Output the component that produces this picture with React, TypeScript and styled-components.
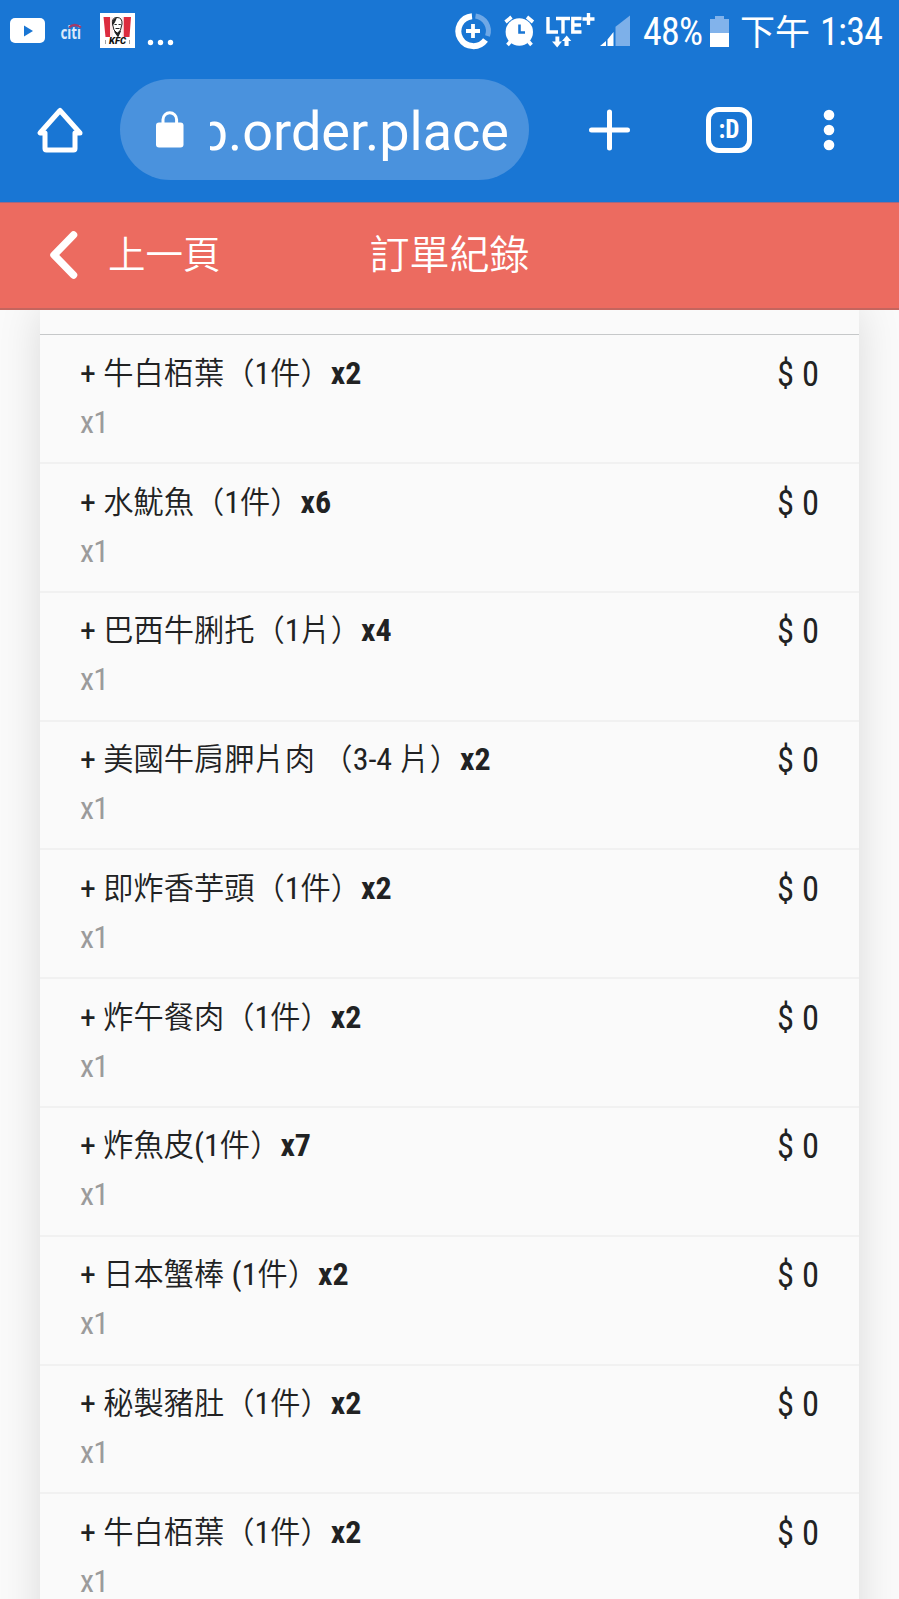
import React from 'react';
import styled, { createGlobalStyle } from 'styled-components';

const GlobalStyle = createGlobalStyle`
  * { box-sizing: border-box; }
  html, body { margin: 0; padding: 0; background: #fafafa; }
  body {
    height: 1599px;
    overflow: hidden;
    font-family: Roboto, 'Noto Sans CJK TC', sans-serif;
    color: #212223;
  }
`;

const Page = styled.div`
  width: 899px;
  height: 1599px;
  display: flex;
  flex-direction: column;
  overflow: hidden;
`;

const StatusBar = styled.div`
  flex: none;
  height: 66px;
  padding: 0 16px 4px 10px;
  display: flex;
  align-items: center;
  justify-content: space-between;
  background: #1976d4;
  color: #fff;
`;

const StatusGroup = styled.div`
  display: flex;
  align-items: center;
`;

const StatusText = styled.span<{ $left: number; $width: number }>`
  margin-left: ${(p) => p.$left}px;
  width: ${(p) => p.$width}px;
  padding-top: 2px;
  white-space: nowrap;
  font-size: 38px;
  line-height: 44px;
  letter-spacing: -0.7px;
  font-stretch: 75%;
`;

const MeridiemText = styled(StatusText)`
  font-family: 'Noto Sans CJK TC', sans-serif;
  font-size: 35px;
  font-weight: 400;
  letter-spacing: 0;
  padding: 0 0 2px;
`;

const BrowserBar = styled.div`
  flex: none;
  height: 136px;
  padding: 13px 57px 22px 36px;
  display: flex;
  align-items: center;
  background: #1976d4;
  color: #fff;
`;

const UrlPill = styled.div`
  width: 409px;
  height: 101px;
  margin: 0 60px 0 36px;
  padding: 0 20px 0 36px;
  border-radius: 51px;
  background: #4a92dd;
  display: flex;
  align-items: center;
`;

const UrlWindow = styled.div`
  flex: 1;
  margin-left: 26px;
  overflow: hidden;
  display: flex;
  justify-content: flex-end;
  font-size: 54px;
  line-height: 68px;
  padding-top: 4px;
`;

const ToolGap = styled.div<{ $w: number }>`
  width: ${(p) => p.$w}px;
`;

const TabCount = styled.div`
  width: 46px;
  height: 46px;
  border: 5px solid #fff;
  border-radius: 13px;
  display: flex;
  align-items: center;
  justify-content: center;
  font-size: 25px;
  font-weight: 700;
  font-stretch: 75%;
  line-height: 30px;
`;

const Header = styled.header`
  flex: none;
  height: 108px;
  padding-bottom: 1px;
  display: grid;
  grid-template-columns: 1fr auto 1fr;
  align-items: center;
  background: #ec6b60;
  border-top: 1px solid #a4677f;
  border-bottom: 2px solid #c4655e;
  color: #fff;
  font-family: 'Noto Sans CJK TC', sans-serif;
  font-weight: 350;
`;

const BackButton = styled.div`
  display: flex;
  align-items: center;
  gap: 30px;
  padding-left: 49px;
  font-size: 37.5px;
`;

const BackLabel = styled.span`
  line-height: 50px;
  padding-bottom: 7px;
`;

const Title = styled.div`
  font-size: 40px;
  line-height: 50px;
  padding-bottom: 7px;
`;

const Content = styled.main`
  flex: 1;
  min-height: 0;
  padding: 0 40px;
  overflow: hidden;
`;

const Card = styled.div`
  background: #fafafa;
  box-shadow: 0 0 40px rgba(0, 0, 0, 0.13);
  padding-top: 24px;
  height: 1400px;
`;

const Row = styled.div<{ $first?: boolean }>`
  height: ${(p) => (p.$first ? 128 : 128.8)}px;
  border-top: ${(p) => (p.$first ? '1px solid #c6c8c9' : '2px solid #f1f1f1')};
  padding: ${(p) => (p.$first ? 17 : 16.5)}px 40px 0 40px;
  display: flex;
  justify-content: space-between;
  font-stretch: 75%;
`;

const ItemName = styled.div`
  height: 44px;
  font-size: 32px;
  line-height: 38px;
  white-space: pre;
  b { font-weight: 700; }
`;

const Han = styled.span`
  font-family: 'Noto Sans CJK TC', sans-serif;
  font-size: 30.25px;
  font-weight: 350;
`;

const Bracket = styled(Han)`
  font-family: 'Noto Sans CJK JP', sans-serif;
`;

const ItemQty = styled.div`
  margin-top: 4px;
  font-size: 32px;
  line-height: 44px;
  letter-spacing: -0.8px;
  color: #9b9b9b;
`;

const Price = styled.div`
  font-size: 34.5px;
  line-height: 44px;
  white-space: nowrap;
`;

const items: [string, string][] = [
  ['牛白栢葉（1件）', 'x2'],
  ['水魷魚（1件）', 'x6'],
  ['巴西牛脷托（1片）', 'x4'],
  ['美國牛肩胛片肉 （3-4 片）', 'x2'],
  ['即炸香芋頭（1件）', 'x2'],
  ['炸午餐肉（1件）', 'x2'],
  ['炸魚皮(1件）', 'x7'],
  ['日本蟹棒 (1件）', 'x2'],
  ['秘製豬肚（1件）', 'x2'],
  ['牛白栢葉（1件）', 'x2'],
];

/* Sets Chinese characters and full-width brackets in their own faces. */
const MixedText = ({ text }: { text: string }) => (
  <>
    {text.split(/([（）]|[\u4e00-\u9fff]+)/).map((part, i) => {
      if (/^[（）]$/.test(part)) return <Bracket key={i} lang="ja">{part}</Bracket>;
      if (/^[\u4e00-\u9fff]/.test(part)) return <Han key={i}>{part}</Han>;
      return part;
    })}
  </>
);

const NotificationIcons = () => (
  <svg width="166" height="50" viewBox="10 6 166 50">
    <rect x="10" y="18" width="35" height="25" rx="5" fill="#fff" />
    <path d="M24 25.5L33 31L24 36.5Z" fill="#1976d4" />
    <text x="60.5" y="38.5" fontSize="18.5" fontWeight="700" textLength="20.5" lengthAdjust="spacingAndGlyphs" fill="#dbe9fa" fontFamily="'Noto Sans', sans-serif">citi</text>
    <path d="M69 27.500Q74.500 22.500 81 27.500" stroke="#a23a68" strokeWidth="2.2" fill="none" />
    <rect x="100" y="13" width="35" height="35" fill="#fff" />
    <path d="M103.5 17H110V37H105.5ZM123.5 17H131L129.500 37H123.500Z" fill="#dc2c3e" />
    <path d="M110 17h3v20h-3zM121.500 17h2v20h-2z" fill="#fbeaea" />
    <path d="M112.500 24Q111.500 17.500 117 17.500T122 24L120.500 30L117.500 33.500L114 30Z" fill="#fff" stroke="#222" strokeWidth="1" />
    <path d="M113 24Q113 19 116 18.500L114.500 22ZM114.500 24.500h2.300M118.500 24.500h2.300M115.500 28.500h4M114.500 31.500L117.500 33.500L120.500 31L118 36.500Z" fill="#222" stroke="#222" strokeWidth="1.100" />
    <path d="M105.500 40V44M129.500 40V44" stroke="#888" strokeWidth="0.800" />
    <text x="109" y="43.500" fontSize="8.500" fontWeight="900" fontStyle="italic" textLength="17" lengthAdjust="spacingAndGlyphs" fill="#111" fontFamily="Roboto, sans-serif">KFC</text>
    <g fill="#fff">
      <circle cx="150.500" cy="42.500" r="2.700" />
      <circle cx="160.500" cy="42.500" r="2.700" />
      <circle cx="170.500" cy="42.500" r="2.700" />
    </g>
  </svg>
);

const SystemIcons = () => (
  <svg width="177" height="50" viewBox="454 6 177 50">
    <g fill="none" stroke="#fff">
      <path d="M475.500 16A15 15 0 0 1 487.500 36" stroke="#6fa8e6" strokeWidth="5" />
      <path d="M472 16.200A15 15 0 1 0 485.500 40" strokeWidth="6" />
      <path d="M473 24V38M466 31H480" strokeWidth="3.800" />
    </g>
    <circle cx="519.300" cy="32" r="13.700" fill="#fff" />
    <path d="M519.500 24.500V32.500H525" fill="none" stroke="#1976d4" strokeWidth="2.600" />
    <path d="M505.500 22L511.500 17M527 17L533 22M510.500 41.500L507.500 45M528.500 41.500L531.500 45" stroke="#fff" strokeWidth="3.600" />
    <g fill="none" stroke="#fff" strokeWidth="3.400">
      <path d="M548 17V32H558M556 18.500H570M563 18V33.500M581.500 18.500H572.800V32H581.500M573 25H581M588.500 13V25M582.500 19H594.500" />
    </g>
    <path d="M555.400 36.500H559.300V41.500H562L557.200 47.500L552 41.500H555.400ZM564.500 46V41H562L566.700 35.500L571.300 41H568.600V46Z" fill="#fff" />
    <path d="M615.500 26.800L630 15.500V46H615.500Z" fill="#7db0e9" />
    <path d="M600 46L606 41V46ZM607.500 39.500L613.500 32V46H607.500Z" fill="#fff" />
  </svg>
);

const BatteryIcon = styled.svg`
  display: block;
  margin-left: 8px;
`;

export default function App() {
  return (
    <Page>
      <GlobalStyle />
      <StatusBar>
        <StatusGroup>
          <NotificationIcons />
        </StatusGroup>
        <StatusGroup>
          <SystemIcons />
          <StatusText $left={12} $width={59}>48%</StatusText>
          <BatteryIcon width="19" height="31" viewBox="0 0 19 31">
            <path d="M0 3H5V0H14V3H19V17H0Z" fill="#82b3eb" />
            <path d="M0 17H19V31H0Z" fill="#fff" />
          </BatteryIcon>
          <MeridiemText $left={11} $width={70}>下午</MeridiemText>
          <StatusText $left={10} $width={63}>1:34</StatusText>
        </StatusGroup>
      </StatusBar>
      <BrowserBar>
        <svg width="48" height="50" viewBox="36 106 48 50" fill="none" stroke="#fff" strokeWidth="5" strokeLinejoin="round">
          <path d="M40 134H45V149.500Q45 151 46.500 151H73.500Q75 151 75 149.500V134H80L60 111.500Z" />
        </svg>
        <UrlPill>
          <svg width="28" height="38" viewBox="156 111 28 38">
            <rect x="156" y="122.500" width="27.500" height="25" rx="3" fill="#fff" />
            <path d="M163 124V119.500A6.800 6.800 0 0 1 176.600 119.500V124" fill="none" stroke="#fff" strokeWidth="3" />
          </svg>
          <UrlWindow>
            <span>p.order.place</span>
          </UrlWindow>
        </UrlPill>
        <svg width="41" height="42" viewBox="0 0 41 42" stroke="#fff" strokeWidth="5" strokeLinecap="round">
          <path d="M20.500 3V39M2.500 21H38.500" />
        </svg>
        <ToolGap $w={76} />
        <TabCount>:D</TabCount>
        <ToolGap $w={71} />
        <svg width="12" height="42" viewBox="0 0 12 42" fill="#fff">
          <circle cx="6" cy="6" r="5.300" />
          <circle cx="6" cy="21" r="5.300" />
          <circle cx="6" cy="36" r="5.300" />
        </svg>
      </BrowserBar>
      <Header>
        <BackButton>
          <svg width="29" height="50" viewBox="0 0 29 50" fill="none" stroke="#fff" strokeWidth="7.500" strokeLinecap="round" strokeLinejoin="round">
            <path d="M24.500 5L5 25L24.500 45" />
          </svg>
          <BackLabel>上一頁</BackLabel>
        </BackButton>
        <Title>訂單紀錄</Title>
        <span />
      </Header>
      <Content>
        <Card>
          {items.map(([name, count], i) => (
            <Row key={i} $first={i === 0}>
              <div>
                <ItemName>+ <MixedText text={name} /><b>{count}</b></ItemName>
                <ItemQty>x1</ItemQty>
              </div>
              <Price>$ 0</Price>
            </Row>
          ))}
        </Card>
      </Content>
    </Page>
  );
}
